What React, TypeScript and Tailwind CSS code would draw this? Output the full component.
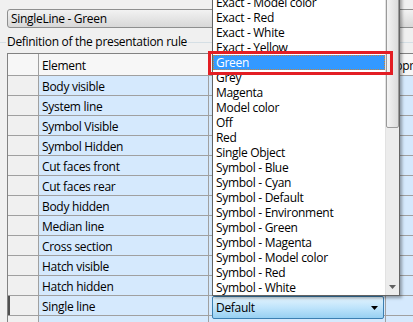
import React from "react";

const rows = [
  "Body visible",
  "System line",
  "Symbol Visible",
  "Symbol Hidden",
  "Cut faces front",
  "Cut faces rear",
  "Body hidden",
  "Median line",
  "Cross section",
  "Hatch visible",
  "Hatch hidden",
  "Single line",
  "",
];

const items = [
  "Exact - Model color",
  "Exact - Red",
  "Exact - White",
  "Exact - Yellow",
  "Green",
  "Grey",
  "Magenta",
  "Model color",
  "Off",
  "Red",
  "Single Object",
  "Symbol - Blue",
  "Symbol - Cyan",
  "Symbol - Default",
  "Symbol - Environment",
  "Symbol - Green",
  "Symbol - Magenta",
  "Symbol - Model color",
  "Symbol - Red",
  "Symbol - White",
];

export default function App() {
  return (
    <div className="relative w-[413px] h-[322px] overflow-hidden bg-[#f0f0f0] text-[12px] tracking-[-0.3px] text-black font-['Open_Sans',sans-serif]">
      {/* top combobox */}
      <div className="pt-[9px] pl-[7px]">
        <div className="w-[440px] h-[19px] rounded-[3px] border border-[#8e8f8f] bg-gradient-to-b from-[#f2f2f2] to-[#d8d8d8] pl-[3px] leading-[17px]">
          SingleLine - Green
        </div>
      </div>

      {/* group box label */}
      <div className="mt-[7px] flex h-[14px] items-center">
        <div className="h-px w-[6px] bg-[#d5dfe5]" />
        <div className="px-[1px] leading-[14px]">Definition of the presentation rule</div>
        <div className="h-px flex-1 bg-[#d5dfe5]" />
      </div>

      {/* table */}
      <div className="mt-[4px] ml-[7px] w-[420px] border-l border-t border-[#828282]">
        <div className="grid h-[22px] grid-cols-[31px_170px_177px_100px] border-b border-[#a0a0a0] bg-[#f7f7f7]">
          <div className="border-r border-[#a0a0a0]" />
          <div className="border-r border-[#a0a0a0] pl-[3px] pt-[2px] leading-[19px]">Element</div>
          <div className="border-r border-[#a0a0a0]" />
          <div className="pl-[2px] pt-[2px] leading-[19px]">Approval</div>
        </div>
        {rows.map((r, i) => (
          <div
            key={i}
            className="grid h-[20px] grid-cols-[31px_170px_177px_100px] border-b border-[#a0a0a0]"
          >
            <div
              className={
                r === "Single line"
                  ? "border-r border-[#a0a0a0] border-l-2 border-l-[#505050] bg-[#f0f0f0]"
                  : "border-r border-[#a0a0a0] bg-[#f0f0f0]"
              }
            />
            <div className="border-r border-[#a0a0a0] bg-[#d5e9fd] pl-[3px] pt-[2px] leading-[17px]">{r}</div>
            <div className="border-r border-[#a0a0a0] bg-[#d5e9fd]" />
            <div className="bg-[#d5e9fd]" />
          </div>
        ))}
      </div>

      {/* editing combobox */}
      <div className="absolute left-[212px] top-[296px] flex h-[23px] w-[172px] items-center justify-between rounded-[2px] border border-[#3c7fb1] bg-gradient-to-b from-[#e3f3fd] via-[#bfe4fb] to-[#97d0f2] pl-[3px] pr-[5px]">
        <span className="leading-[20px]">Default</span>
        <svg width="7" height="4" viewBox="0 0 7 4">
          <polygon points="0,0 7,0 3.5,4" fill="#000" />
        </svg>
      </div>

      {/* dropdown list */}
      <div className="absolute left-[212px] top-[-6px] flex h-[302px] w-[188px] border border-[#646464] bg-white shadow-[2px_2px_3px_rgba(0,0,0,0.35)]">
        <div className="flex-1">
          {items.map((it, i) => (
            <div
              key={i}
              className={
                i === 4
                  ? "h-[15px] border border-dotted border-[#c8843a] bg-[#3399ff] pl-[2px] leading-[13px] text-white"
                  : "h-[15px] pl-[3px] leading-[15px]"
              }
            >
              {it}
            </div>
          ))}
        </div>
        <div className="relative w-[14px] bg-[#ececec] border-l border-[#e2e2e2]">
          <div className="absolute left-[0px] right-[0px] top-[0px] h-[133px] rounded-[2px] border border-[#9a9a9a] bg-gradient-to-r from-[#f4f4f4] to-[#dcdcdc]" />
          <svg className="absolute left-[3px] bottom-[6px]" width="7" height="4" viewBox="0 0 7 4">
            <polygon points="0,0 7,0 3.5,4" fill="#606060" />
          </svg>
        </div>
      </div>

      {/* red highlight */}
      <div className="absolute left-[208px] top-[51px] h-[24px] w-[185px] border-[3px] border-[#e31e24]" />
    </div>
  );
}
